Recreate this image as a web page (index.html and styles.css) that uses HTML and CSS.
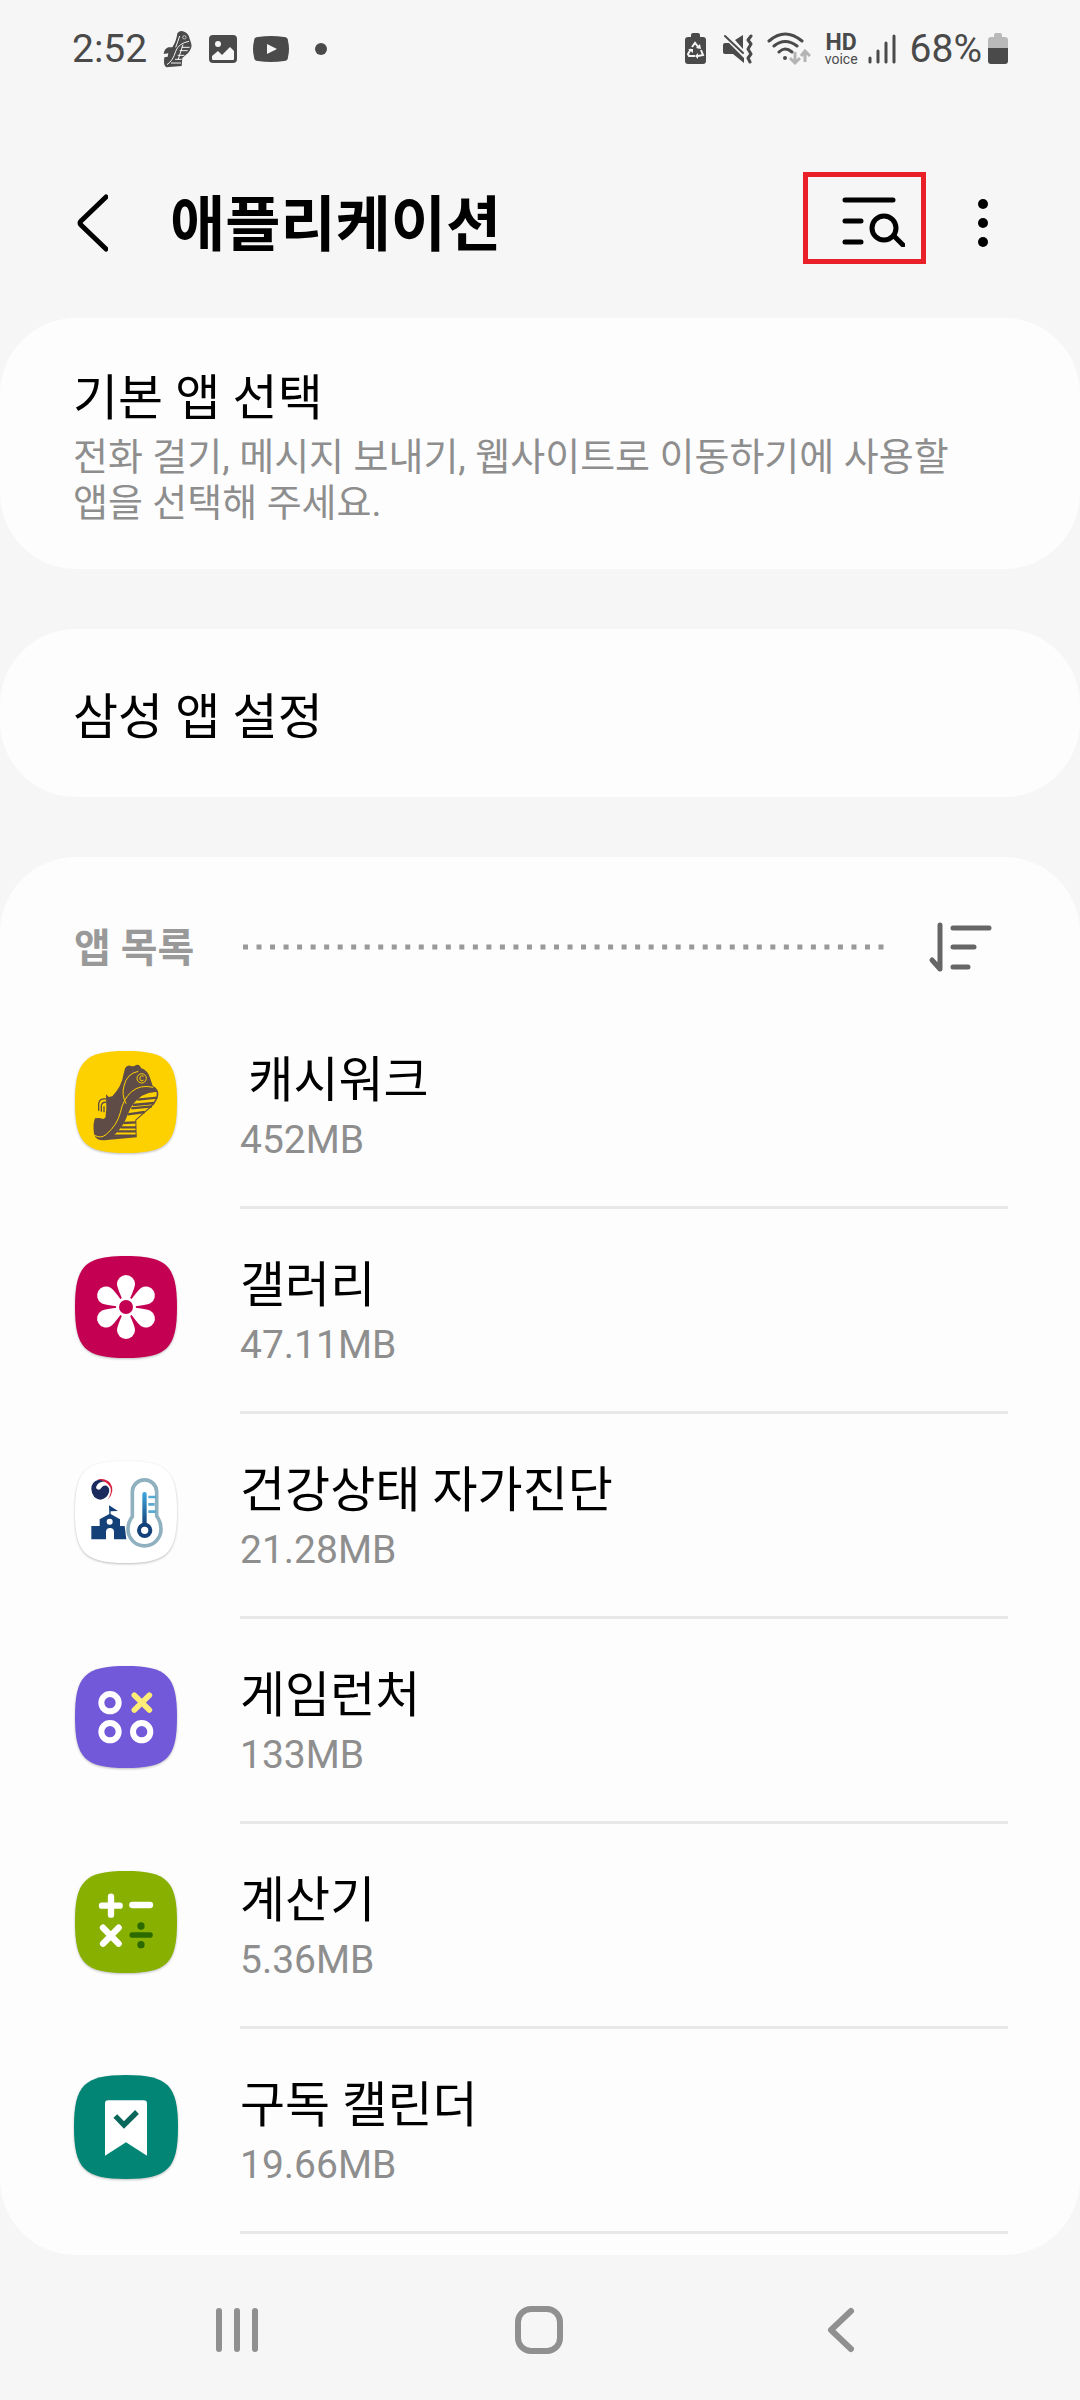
FILE: index.html
```html
<!DOCTYPE html>
<html lang="ko">
<head>
<meta charset="UTF-8">
<meta name="viewport" content="width=device-width, initial-scale=1.0">
<title>애플리케이션</title>
<link rel="stylesheet" href="styles.css">
</head>
<body>
<div class="status-bar">
  <div class="status-left">
    <span class="clock">2:52</span>
    <svg class="shoe" width="30" height="38" viewBox="0 0 90 114">
      <path fill="#4a4a4a" d="M43 10Q50 1 60 4Q76 8 80 26L85 42Q88 54 76 68L58 84L56 108L10 112Q0 106 4 82L14 80L16 70L2 72Q4 56 16 52L28 52Q40 34 43 10Z"/>
      <path fill="none" stroke="#f6f6f6" stroke-width="3" d="M12 104Q30 92 38 64Q46 40 78 34M45 90L60 44M56 52H80M50 62H74M44 76H64M36 88H56M24 99H54M50 18Q44 36 38 52"/>
      <circle cx="64" cy="22" r="5" fill="none" stroke="#f6f6f6" stroke-width="2"/>
    </svg>
    <svg width="28" height="28" viewBox="0 0 28 28">
      <rect width="28" height="28" rx="4" fill="#4a4a4a"/>
      <circle cx="9" cy="9" r="3" fill="#f6f6f6"/>
      <path fill="#f6f6f6" d="M3 21L9 16L13 20L21 12L25 16V24Q25 25 24 25H4Q3 25 3 24Z"/>
    </svg>
    <svg width="36" height="26" viewBox="0 0 36 26">
      <path fill="#4a4a4a" d="M5 1Q18 -1 31 1Q35 1 35 5Q37 13 35 21Q35 25 31 25Q18 27 5 25Q1 25 1 21Q-1 13 1 5Q1 1 5 1Z"/>
      <path fill="#f6f6f6" d="M14 8L24 13L14 18Z"/>
    </svg>
    <span class="more-dot"></span>
  </div>
  <div class="status-right">
    <svg width="21" height="32" viewBox="0 0 21 32">
      <path fill="#4a4a4a" d="M6 4V2Q6 0 8 0H13Q15 0 15 2V4H18Q21 4 21 7V28Q21 31 18 31H3Q0 31 0 28V7Q0 4 3 4Z"/>
      <path fill="none" stroke="#f6f6f6" stroke-width="2" d="M7 14L10 10L14 15M16 17L18 22L13 23M10 23H4L3 21L6 16"/>
      <path fill="#f6f6f6" d="M11 15L16 16L15 11ZM13 20V26L10 23ZM3 16H8L8 20Z"/>
    </svg>
    <svg class="mute" width="30" height="30" viewBox="0 0 30 30">
      <path fill="#4a4a4a" d="M2 9H6L21 24V29L10 20H2Q0 20 0 18V11Q0 9 2 9ZM12 6L20 1V15Z"/>
      <path fill="none" stroke="#4a4a4a" stroke-width="2" stroke-linecap="round" d="M2 2L20 19"/>
      <path fill="none" stroke="#4a4a4a" stroke-width="3" stroke-linejoin="round" stroke-linecap="round" d="M28 2L25 6L28 10L25 15L28 20L25 24L27 28"/>
    </svg>
    <svg width="44" height="34" viewBox="0 0 44 34">
      <g fill="none" stroke="#4a4a4a" stroke-width="3" stroke-linecap="round">
        <path d="M2 9Q18 -5 35 9M7 14Q18 5 30 14M12 20Q18 14 25 20"/>
      </g>
      <circle cx="18" cy="26" r="2" fill="#4a4a4a"/>
      <path fill="none" stroke="#b4b4b4" stroke-width="3" d="M28 20V31M23 26L28 31L33 26M38 30V19M34 24L38 19L43 24"/>
    </svg>
    <span class="hd-voice"><b>HD</b><span>voice</span></span>
    <svg class="signal" width="28" height="30" viewBox="0 0 28 30">
      <path stroke="#4a4a4a" stroke-width="3" stroke-linecap="round" d="M2 24V28M10 17V28M18 9V28M26 2V28"/>
    </svg>
    <span class="battery-level">68%</span>
    <svg class="battery" width="20" height="32" viewBox="0 0 20 32">
      <path fill="#b9b9b9" d="M6 4V2Q6 0 8 0H12Q14 0 14 2V4H17Q20 4 20 7V15H0V7Q0 4 3 4Z"/>
      <path fill="#4a4a4a" d="M0 15H20V28Q20 31 17 31H3Q0 31 0 28Z"/>
    </svg>
  </div>
</div>

<header class="app-bar">
  <button class="icon-btn back" aria-label="뒤로">
    <svg width="32" height="60" viewBox="0 0 32 60"><path d="M30 4L5 28Q3 30 5 32L30 56"/></svg>
  </button>
  <h1>애플리케이션</h1>
  <button class="icon-btn search highlighted" aria-label="검색">
    <svg width="64" height="52" viewBox="0 0 64 52">
      <path d="M4 5H52M4 26H20M4 47H20M54 42L62 50"/>
      <circle cx="43" cy="33" r="12"/>
    </svg>
  </button>
  <button class="icon-btn more" aria-label="더보기">
    <svg width="10" height="48" viewBox="0 0 10 48"><circle cx="5" cy="5" r="5"/><circle cx="5" cy="24" r="5"/><circle cx="5" cy="43" r="5"/></svg>
  </button>
</header>

<main>
  <a class="card setting" href="#default-apps">
    <span class="name">기본 앱 선택</span>
    <span class="desc">전화 걸기, 메시지 보내기, 웹사이트로 이동하기에 사용할 앱을 선택해 주세요.</span>
  </a>

  <a class="card setting" href="#samsung-apps">
    <span class="name">삼성 앱 설정</span>
  </a>

  <section class="card app-list">
    <div class="list-head">
      <h2>앱 목록</h2>
      <svg class="dots" height="6" viewBox="0 0 1280 12" preserveAspectRatio="none"><path d="M0 6H1280"/></svg>
      <button class="icon-btn sort" aria-label="정렬">
        <svg width="64" height="50" viewBox="0 0 64 50"><path d="M12 3V47L4 38M25 6H61M25 25H46M25 45H40"/></svg>
      </button>
    </div>
    <ul>
      <li>
        <a href="#cashwalk">
          <svg class="app-icon" viewBox="0 0 312 312">
            <path fill="#fdd100" d="M156 3C279 3 309 33 309 156S279 309 156 309 3 279 3 156 33 3 156 3Z"/>
            <g transform="translate(-42 -57)">
              <path fill="#5f4c46" d="M195 112Q202 100 213 105Q222 108 228 102Q238 98 243 111Q264 119 270 140L278 164Q297 174 295 192Q292 212 270 232L229 268L230 319L140 327Q108 332 102 308Q98 278 105 262Q120 260 129 264Q138 262 137 252L139 235L138 190L146 198L157 196Q186 164 190 132Z"/>
              <path fill="#fdd100" d="M158 316Q190 290 204 248Q216 214 246 194Q268 182 290 183Q293 205 269 228L226 266L227 315Z"/>
              <path fill="none" stroke="#5f4c46" stroke-width="7" d="M232 206L292 200M218 222L283 216M214 232L276 226M203 250L254 243M190 276L228 274M182 289H228M172 301H228M158 314H229"/>
              <path fill="none" stroke="#fdd100" stroke-width="3" d="M104 313Q122 324 139 310Q171 283 181 245Q190 202 215 182Q240 160 280 169M198 218Q184 190 192 165Q200 128 235 121"/>
              <path fill="none" stroke="#5f4c46" stroke-width="4" d="M116 239V218Q118 202 138 204M124 242V224Q126 212 139 214M132 244V226"/>
              <circle cx="245" cy="142" r="14" fill="none" stroke="#fdd100" stroke-width="3"/>
              <path fill="none" stroke="#fdd100" stroke-width="3" d="M251 136Q244 131 240 138Q237 149 246 150L251 147"/>
            </g>
          </svg>
          <span class="info"><span class="name">&#8198;캐시워크</span><span class="size">452MB</span></span>
        </a>
      </li>
      <li>
        <a href="#gallery">
          <svg class="app-icon" viewBox="0 0 312 312">
            <path fill="#c40052" d="M156 3C279 3 309 33 309 156S279 309 156 309 3 279 3 156 33 3 156 3Z"/>
            <g fill="#fff">
              <path id="petal" d="M156 156Q129 100 129 87A27 27 0 0 1 183 87Q183 100 156 156Z"/>
              <use href="#petal" transform="rotate(60 156 156)"/>
              <use href="#petal" transform="rotate(120 156 156)"/>
              <use href="#petal" transform="rotate(180 156 156)"/>
              <use href="#petal" transform="rotate(240 156 156)"/>
              <use href="#petal" transform="rotate(300 156 156)"/>
              <circle cx="156" cy="156" r="30"/>
            </g>
            <circle cx="156" cy="156" r="21" fill="#c40052"/>
          </svg>
          <span class="info"><span class="name">갤러리</span><span class="size">47.11MB</span></span>
        </a>
      </li>
      <li>
        <a href="#health-check">
          <svg class="app-icon" viewBox="0 0 312 312">
            <defs>
              <linearGradient id="mercury" x1="0" y1="0" x2="0" y2="1"><stop offset="0" stop-color="#3fa9e0"/><stop offset="1" stop-color="#134178"/></linearGradient>
            </defs>
            <path fill="#fff" d="M156 3C279 3 309 33 309 156S279 309 156 309 3 279 3 156 33 3 156 3Z"/>
            <g transform="translate(-42 -44)">
              <path fill="#1b2a5c" d="M94 131Q94 108 116 103Q130 101 140 109Q118 107 110 121Q106 128 112 132Q120 136 124 127Q130 118 140 121Q150 127 147 141Q141 161 122 163Q96 160 94 131Z"/>
              <path fill="#d8213f" d="M112 103Q134 97 150 112Q168 137 142 165Q157 142 151 126Q142 106 112 103Z"/>
              <path fill="#134178" d="M147 180L174 197L152 198V206L180 222V242H194L199 282H162V260A12 12 0 0 0 138 260V282H94V242H119V222L148 206Z"/>
              <circle cx="149" cy="229" r="9" fill="#fff"/>
              <path fill="#fff" stroke="#8fb0bf" stroke-width="11" d="M217 140A36 36 0 0 1 290 140V212Q303 230 303 252A49 49 0 0 1 204 252Q204 230 217 214Z"/>
              <rect x="247" y="140" width="13" height="100" rx="6" fill="url(#mercury)"/>
              <path stroke="#5aa9d2" stroke-width="8" d="M265 155H288M265 177H284M265 199H288"/>
              <circle cx="254" cy="255" r="17" fill="#fff" stroke="#134178" stroke-width="12"/>
            </g>
          </svg>
          <span class="info"><span class="name">건강상태 자가진단</span><span class="size">21.28MB</span></span>
        </a>
      </li>
      <li>
        <a href="#game-launcher">
          <svg class="app-icon" viewBox="0 0 312 312">
            <path fill="#7259d9" d="M156 3C279 3 309 33 309 156S279 309 156 309 3 279 3 156 33 3 156 3Z"/>
            <g fill="none" stroke="#fff" stroke-width="18">
              <circle cx="108" cy="113" r="26"/><circle cx="108" cy="200" r="26"/><circle cx="203" cy="200" r="26"/>
            </g>
            <path stroke="#fdec76" stroke-width="17" stroke-linecap="round" d="M181 91L226 135M226 91L181 135"/>
          </svg>
          <span class="info"><span class="name">게임런처</span><span class="size">133MB</span></span>
        </a>
      </li>
      <li>
        <a href="#calculator">
          <svg class="app-icon" viewBox="0 0 312 312">
            <path fill="#87b000" d="M156 3C279 3 309 33 309 156S279 309 156 309 3 279 3 156 33 3 156 3Z"/>
            <path stroke="#fff" stroke-width="19" stroke-linecap="round" d="M84 107H137M111 80V134M175 105H228M87 173L134 221M134 173L87 221"/>
            <path stroke="#2c6a00" stroke-width="17" stroke-linecap="round" d="M175 195H228"/>
            <circle cx="201" cy="168" r="11" fill="#2c6a00"/><circle cx="201" cy="224" r="11" fill="#2c6a00"/>
          </svg>
          <span class="info"><span class="name">계산기</span><span class="size">5.36MB</span></span>
        </a>
      </li>
      <li>
        <a href="#calendar">
          <svg class="app-icon" viewBox="0 0 312 312">
            <path fill="#028574" d="M156 0C281 0 312 31 312 156S281 312 156 312 0 281 0 156 31 0 156 0Z"/>
            <path fill="#fff" d="M103 76H209Q219 76 219 86V242L156 202L93 242V86Q93 76 103 76Z"/>
            <path fill="none" stroke="#0b665b" stroke-width="16" d="M124 123L150 150L189 111"/>
          </svg>
          <span class="info"><span class="name">구독 캘린더</span><span class="size">19.66MB</span></span>
        </a>
      </li>
    </ul>
  </section>
</main>

<nav class="nav-bar">
  <button aria-label="최근 앱"><svg width="48" height="50" viewBox="0 0 48 50"><path d="M6 6V44M24 6V44M42 6V44"/></svg></button>
  <button aria-label="홈"><svg width="48" height="50" viewBox="0 0 48 50"><rect x="3" y="4" width="42" height="42" rx="13"/></svg></button>
  <button aria-label="이전"><svg width="48" height="50" viewBox="0 0 48 50"><path d="M34 6L14 25L34 44"/></svg></button>
</nav>
</body>
</html>
```
FILE: styles.css
```css
* {
  box-sizing: border-box;
}
body {
  margin: 0;
  min-height: 100vh;
  display: flex;
  flex-direction: column;
  background-color: #f6f6f6;
  color: #000;
  font-family: Roboto, "Noto Sans CJK KR", sans-serif;
}
svg {
  display: block;
  flex: none;
}
button {
  padding: 0;
  border: none;
  background: none;
  cursor: pointer;
}
a {
  color: inherit;
  text-decoration: none;
}
h1, h2, ul {
  margin: 0;
  padding: 0;
}
ul {
  list-style: none;
}

/* status bar */
.status-bar {
  display: flex;
  justify-content: space-between;
  align-items: center;
  height: 98px;
  padding: 0 72px;
  color: #4a4a4a;
  font-size: 39px;
}
.status-left, .status-right {
  display: flex;
  align-items: center;
}
.status-left {
  gap: 16px;
}
.status-right {
  gap: 14px;
}
.more-dot {
  width: 12px;
  height: 12px;
  margin-left: 10px;
  border-radius: 50%;
  background-color: #4a4a4a;
}
.mute {
  margin-left: 3px;
}
.hd-voice {
  display: flex;
  flex-direction: column;
  align-items: center;
  font-size: 14px;
  line-height: 12px;
}
.hd-voice b {
  font-size: 23px;
  line-height: 20px;
}
.signal {
  margin-left: -4px;
}
.battery {
  margin-left: -8px;
}

/* title */
.app-bar {
  display: flex;
  align-items: center;
  height: 220px;
  padding: 30px 92px 0 76px;
}
.app-bar h1 {
  flex: 1;
  padding: 6px 0 0 62px;
  font-size: 60px;
  line-height: 72px;
  font-weight: 700;
}
.icon-btn svg {
  fill: none;
  stroke: #000;
  stroke-width: 5;
  stroke-linecap: round;
  stroke-linejoin: round;
}
.search {
  display: flex;
  align-items: center;
  justify-content: flex-end;
  width: 123px;
  height: 92px;
  margin-bottom: 10px;
  padding: 6px 16px 0 0;
}
.highlighted {
  border: 5px solid #e92028;
}
.more {
  margin-left: 52px;
}
.app-bar .more svg {
  fill: #000;
  stroke: none;
}

/* cards */
main {
  display: flex;
  flex-direction: column;
  gap: 60px;
}
.card {
  border-radius: 76px;
  background-color: #fdfdfd;
}
.setting {
  display: flex;
  flex-direction: column;
  padding: 46px 73px 43px;
  word-break: keep-all;
}
.name {
  font-size: 49px;
  line-height: 60px;
}
.setting .name {
  line-height: 70px;
}
.setting .name:only-child {
  padding: 8px 0 1px;
}
.desc {
  color: #8e8e8e;
  font-size: 38px;
  line-height: 46px;
}

/* app list */
.app-list {
  padding: 0 72px 21px 74px;
}
.list-head {
  display: flex;
  align-items: center;
  height: 147px;
  padding: 32px 16px 0 0;
}
.list-head h2 {
  width: 169px;
  padding-top: 4px;
  color: #999;
  font-size: 40px;
  line-height: 60px;
  font-weight: 700;
}
.dots {
  flex: 1;
  min-width: 0;
  stroke: #999;
  stroke-width: 10;
  stroke-dasharray: 10 17;
}
.sort {
  margin-left: 44px;
}
.list-head .sort svg {
  stroke: #666;
}
.app-list li a {
  display: flex;
  gap: 62px;
}
.app-icon {
  width: 104px;
  height: 104px;
  margin-top: 46px;
  filter: drop-shadow(0 1px 1px rgba(0, 0, 0, 0.25));
}
.info {
  flex: 1;
  display: flex;
  flex-direction: column;
  height: 205px;
  padding-top: 47px;
  border-bottom: 3px solid #e8e8e8;
}
.size {
  color: #8e8e8e;
  font-size: 39px;
  line-height: 58px;
}

/* bottom navigation */
.nav-bar {
  flex: 1;
  display: grid;
  grid-template-columns: repeat(3, 1fr);
  padding: 5px 88px 0 86px;
}
.nav-bar button {
  display: flex;
  align-items: center;
  justify-content: center;
}
.nav-bar svg {
  fill: none;
  stroke: #909090;
  stroke-width: 6;
  stroke-linecap: round;
  stroke-linejoin: round;
}
```
